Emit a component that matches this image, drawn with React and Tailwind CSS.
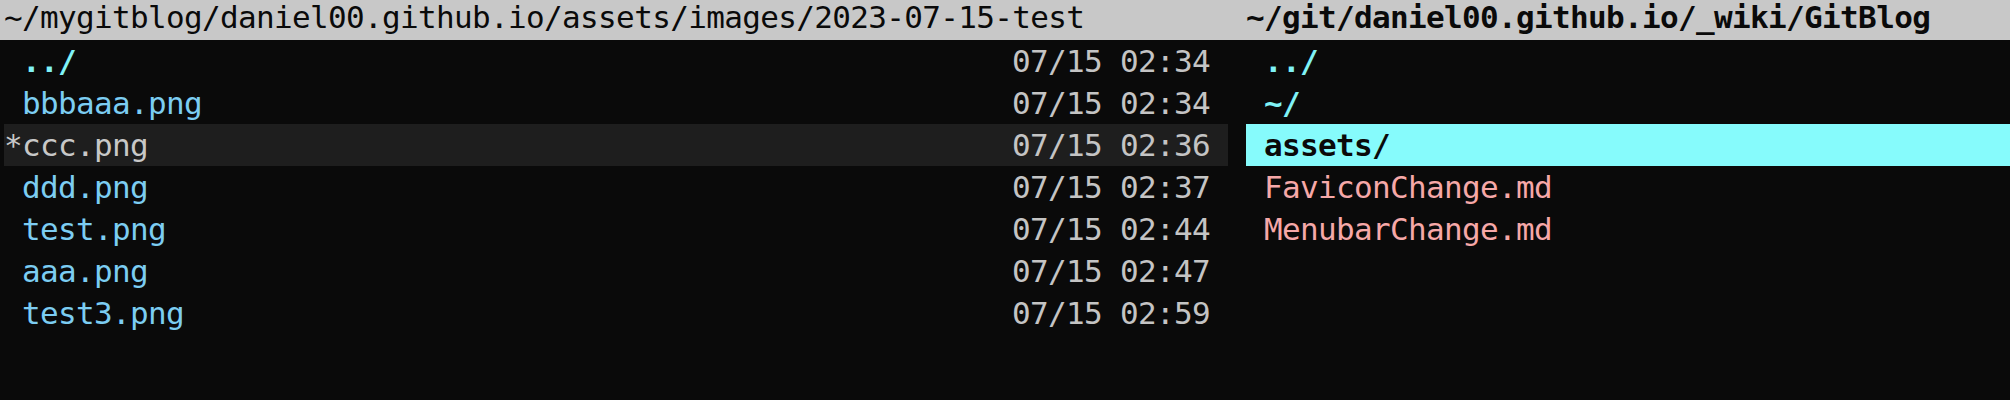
const leftFiles = [
  { name: "../", time: "07/15 02:34", dir: true },
  { name: "bbbaaa.png", time: "07/15 02:34" },
  { name: "ccc.png", time: "07/15 02:36", current: true },
  { name: "ddd.png", time: "07/15 02:37" },
  { name: "test.png", time: "07/15 02:44" },
  { name: "aaa.png", time: "07/15 02:47" },
  { name: "test3.png", time: "07/15 02:59" },
];

const rightFiles = [
  { name: "../", dir: true },
  { name: "~/", dir: true },
  { name: "assets/", dir: true, selected: true },
  { name: "FaviconChange.md" },
  { name: "MenubarChange.md" },
];

const mono = "font-['DejaVu_Sans_Mono','Liberation_Mono',monospace] text-[31px] tracking-[-0.66px] whitespace-pre";

function LeftRow({ file }) {
  const rowBg = file.current ? "bg-[#1e1e1e]" : "";
  const nameColor = file.current
    ? "text-[#c8c8c8]"
    : file.dir
    ? "text-[#80f2f6] font-bold"
    : "text-[#7ccdf2]";
  return (
    <div className={`flex h-[42px] items-center justify-between pr-[18px] leading-[42px] ${rowBg}`}>
      <span className={nameColor}>
        {file.current ? "*" : " "}
        {file.name}
      </span>
      <span className="text-[#c4c4c4]">{file.time}</span>
    </div>
  );
}

function RightRow({ file }) {
  let cls = "text-[#f6a8a8]";
  if (file.selected) cls = "bg-[#86fbfc] text-[#0a0a0a] font-bold";
  else if (file.dir) cls = "text-[#80f2f6] font-bold";
  return (
    <div className={`h-[42px] leading-[42px] ${cls}`}>
      {" "}
      {file.name}
    </div>
  );
}

export default function App() {
  return (
    <div className={`h-[400px] w-full overflow-hidden bg-[#0a0a0a] ${mono}`}>
      <div className="flex h-[40px] bg-[#c8c8c8] leading-[35px] text-[#0a0a0a]">
        <div className="w-[1246px] pl-[4px]">~/mygitblog/daniel00.github.io/assets/images/2023-07-15-test</div>
        <div className="font-bold">~/git/daniel00.github.io/_wiki/GitBlog</div>
      </div>
      <div className="flex pl-[4px]">
        <div className="w-[1224px]">
          {leftFiles.map((f) => (
            <LeftRow key={f.name} file={f} />
          ))}
        </div>
        <div className="ml-[18px] flex-1">
          {rightFiles.map((f) => (
            <RightRow key={f.name} file={f} />
          ))}
        </div>
      </div>
    </div>
  );
}
